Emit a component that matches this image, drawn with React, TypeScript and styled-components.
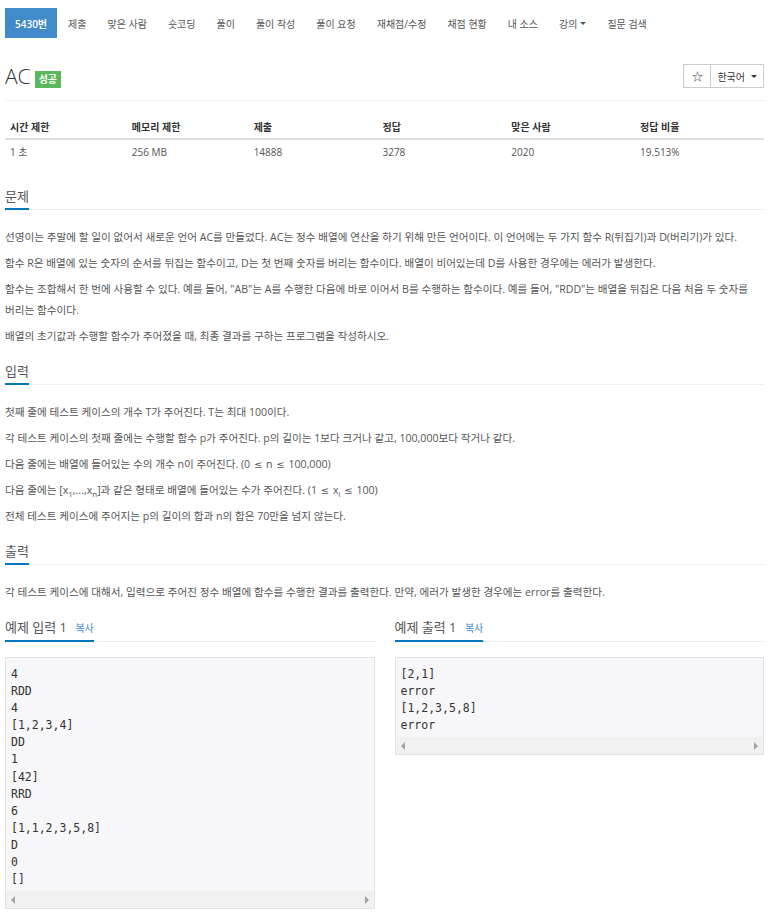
import React from 'react'
import styled, { createGlobalStyle } from 'styled-components'

const GlobalStyle = createGlobalStyle`
    html, body {
        margin: 0;
        padding: 0;
        overflow: hidden;
        background: #fff;
    }
    body {
        font-family: "Open Sans", "Noto Sans CJK KR", sans-serif;
        color: #555;
        font-size: 10px;
    }
`

const navItems = ['제출', '맞은 사람', '숏코딩', '풀이', '풀이 작성', '풀이 요청', '재채점/수정', '채점 현황', '내 소스']

const App: React.FC = () => {
    return (
        <Page>
            <GlobalStyle />
            <Nav>
                <Tab active>5430번</Tab>
                {navItems.map(item => <Tab key={item}>{item}</Tab>)}
                <Tab>강의<Caret /></Tab>
                <Tab>질문 검색</Tab>
            </Nav>

            <TitleRow>
                <Title>
                    AC <Badge>성공</Badge>
                </Title>
                <BtnGroup>
                    <StarButton>☆</StarButton>
                    <LangButton>한국어 <Caret dark /></LangButton>
                </BtnGroup>
            </TitleRow>

            <InfoTable>
                <thead>
                    <tr>
                        <Th w="16%">시간 제한</Th>
                        <Th w="16%">메모리 제한</Th>
                        <Th w="17%">제출</Th>
                        <Th w="17%">정답</Th>
                        <Th w="17%">맞은 사람</Th>
                        <Th w="17%">정답 비율</Th>
                    </tr>
                </thead>
                <tbody>
                    <tr>
                        <Td>1 초 </Td>
                        <Td>256 MB</Td>
                        <Td>14888</Td>
                        <Td>3278</Td>
                        <Td>2020</Td>
                        <Td>19.513%</Td>
                    </tr>
                </tbody>
            </InfoTable>

            <Section>
                <Headline><HeadTitle>문제</HeadTitle></Headline>
                <P>선영이는 주말에 할 일이 없어서 새로운 언어 AC를 만들었다. AC는 정수 배열에 연산을 하기 위해 만든 언어이다. 이 언어에는 두 가지 함수 R(뒤집기)과 D(버리기)가 있다.</P>
                <P>함수 R은 배열에 있는 숫자의 순서를 뒤집는 함수이고, D는 첫 번째 숫자를 버리는 함수이다. 배열이 비어있는데 D를 사용한 경우에는 에러가 발생한다.</P>
                <P>함수는 조합해서 한 번에 사용할 수 있다. 예를 들어, "AB"는 A를 수행한 다음에 바로 이어서 B를 수행하는 함수이다. 예를 들어, "RDD"는 배열을 뒤집은 다음 처음 두 숫자를 버리는 함수이다.</P>
                <P>배열의 초기값과 수행할 함수가 주어졌을 때, 최종 결과를 구하는 프로그램을 작성하시오.</P>
            </Section>

            <Section>
                <Headline><HeadTitle>입력</HeadTitle></Headline>
                <P>첫째 줄에 테스트 케이스의 개수 T가 주어진다. T는 최대 100이다.</P>
                <P>각 테스트 케이스의 첫째 줄에는 수행할 함수 p가 주어진다. p의 길이는 1보다 크거나 같고, 100,000보다 작거나 같다.</P>
                <P>다음 줄에는 배열에 들어있는 수의 개수 n이 주어진다. (0 <Rel>≤</Rel> n <Rel>≤</Rel> 100,000)</P>
                <P>다음 줄에는 [x<sub>1</sub>,...,x<sub>n</sub>]과 같은 형태로 배열에 들어있는 수가 주어진다. (1 <Rel>≤</Rel> x<sub>i</sub> <Rel>≤</Rel> 100)</P>
                <P>전체 테스트 케이스에 주어지는 p의 길이의 합과 n의 합은 70만을 넘지 않는다.</P>
            </Section>

            <Section>
                <Headline><HeadTitle>출력</HeadTitle></Headline>
                <P>각 테스트 케이스에 대해서, 입력으로 주어진 정수 배열에 함수를 수행한 결과를 출력한다. 만약, 에러가 발생한 경우에는 error를 출력한다.</P>
            </Section>

            <Samples>
                <div>
                    <Headline tight><HeadTitle>예제 입력 1 <Copy>복사</Copy></HeadTitle></Headline>
                    <SampleBox>
                        <Pre>{`4
RDD
4
[1,2,3,4]
DD
1
[42]
RRD
6
[1,1,2,3,5,8]
D
0
[]`}</Pre>
                        <ScrollTrack><Arrow /><Arrow right /></ScrollTrack>
                    </SampleBox>
                </div>
                <div>
                    <Headline tight><HeadTitle>예제 출력 1 <Copy>복사</Copy></HeadTitle></Headline>
                    <SampleBox>
                        <Pre>{`[2,1]
error
[1,2,3,5,8]
error`}</Pre>
                        <ScrollTrack><Arrow /><Arrow right /></ScrollTrack>
                    </SampleBox>
                </div>
            </Samples>
        </Page>
    )
}

const Page = styled.div`
    padding: 8px 5px 0;
`

const Nav = styled.ul`
    display: flex;
    margin: 0;
    padding: 0;
    list-style: none;
`

const Tab = styled.li<{ active?: boolean }>`
    display: flex;
    align-items: center;
    height: 30px;
    padding: 0 10px;
    margin-right: 1px;
    font-size: 10px;
    color: ${p => (p.active ? '#fff' : '#555')};
    background: ${p => (p.active ? '#428bca' : 'transparent')};
    font-weight: ${p => (p.active ? 600 : 400)};
    white-space: nowrap;
`

const Caret = styled.span<{ dark?: boolean }>`
    display: inline-block;
    margin-left: 3px;
    width: 0;
    height: 0;
    border-top: 3px solid ${p => (p.dark ? '#333' : '#555')};
    border-left: 3px solid transparent;
    border-right: 3px solid transparent;
`

const TitleRow = styled.div`
    display: flex;
    justify-content: space-between;
    align-items: center;
    margin-top: 26px;
    padding-bottom: 12px;
    border-bottom: 1px solid #eee;
`

const Title = styled.h1`
    margin: 0;
    font-size: 21px;
    font-weight: 300;
    line-height: 24px;
    color: #333;
    display: flex;
    align-items: center;
`

const Badge = styled.span`
    display: inline-block;
    margin-left: 4px;
    margin-top: 7px;
    padding: 0 4px;
    height: 17px;
    line-height: 17px;
    font-size: 10px;
    font-weight: 700;
    color: #fff;
    background: #5cb85c;
`

const BtnGroup = styled.div`
    display: flex;
`

const GroupButton = styled.button`
    height: 24px;
    border: 1px solid #ccc;
    background: #fff;
    color: #333;
    font-family: "Open Sans", "Noto Sans CJK KR", sans-serif;
    font-size: 10px;
    display: flex;
    align-items: center;
    justify-content: center;
`

const StarButton = styled(GroupButton)`
    width: 28px;
    padding: 0;
    font-size: 11px;
`

const LangButton = styled(GroupButton)`
    margin-left: -1px;
    padding: 0 6px;
    gap: 3px;
`

const InfoTable = styled.table`
    width: 100%;
    margin-top: 14px;
    border-collapse: collapse;
    table-layout: fixed;
`

const Th = styled.th<{ w: string }>`
    width: ${p => p.w};
    text-align: left;
    padding: 4px 5px 3px;
    line-height: 16px;
    font-size: 10px;
    font-weight: 700;
    color: #333;
    border-bottom: 2px solid #ddd;
`

const Td = styled.td`
    padding: 4px 5px;
    line-height: 16px;
    font-size: 10px;
    color: #555;
`

const Section = styled.section`
    margin-top: 22px;
    & + & {
        margin-top: 14px;
    }
`

const Headline = styled.div<{ tight?: boolean }>`
    display: flex;
    border-bottom: 1px dotted #ddd;
    margin-bottom: ${p => (p.tight ? '15px' : '17px')};
`

const HeadTitle = styled.h2`
    margin: 0 0 -1px;
    padding-bottom: 2px;
    font-size: 13px;
    line-height: 20px;
    font-weight: 400;
    color: #555;
    border-bottom: 2px solid #0076c0;
`

const Copy = styled.span`
    font-size: 10px;
    color: #428bca;
    margin-left: 5px;
`

const P = styled.p`
    margin: 0 0 5px;
    font-size: 10.6px;
    line-height: 21px;
    color: #555;
    word-break: keep-all;
    sub {
        font-size: 8px;
        line-height: 0;
    }
`

const Rel = styled.span`
    font-family: "DejaVu Sans", sans-serif;
    font-size: 10px;
    padding: 0 1px;
`

const Samples = styled.div`
    display: grid;
    grid-template-columns: 1fr 1fr;
    gap: 20px;
    margin-top: 14px;
    align-items: start;
`

const SampleBox = styled.div`
    border: 1px solid #e1e1e8;
    background: #f7f7f9;
`

const Pre = styled.pre`
    margin: 0;
    padding: 8px 5px 3px;
    font-family: "DejaVu Sans Mono", monospace;
    font-size: 11.5px;
    line-height: 17.1px;
    color: #333;
`

const ScrollTrack = styled.div`
    height: 17px;
    background: #f1f1f1;
    display: flex;
    align-items: center;
    justify-content: space-between;
    padding: 0 5px;
`

const Arrow = styled.span<{ right?: boolean }>`
    width: 0;
    height: 0;
    border-top: 4px solid transparent;
    border-bottom: 4px solid transparent;
    ${p => (p.right ? 'border-left: 4px solid #a3a3a3;' : 'border-right: 4px solid #a3a3a3;')}
`

export default App
